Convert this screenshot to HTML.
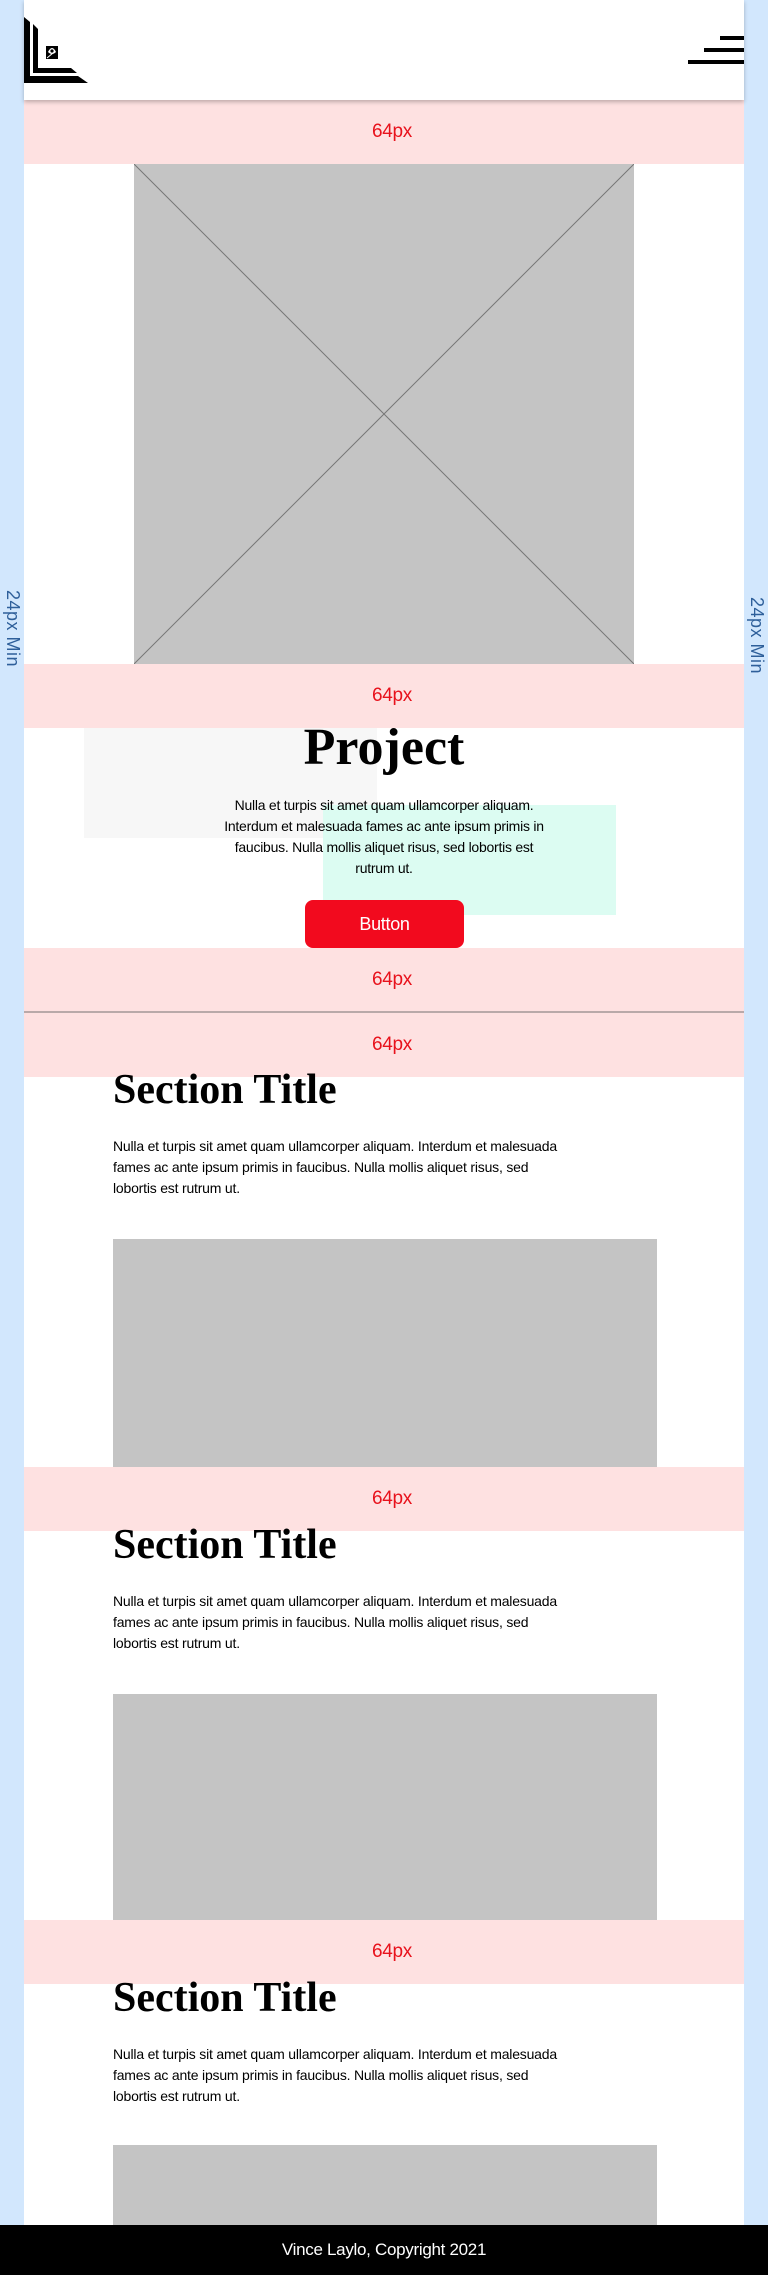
<!DOCTYPE html>
<html><head><meta charset="utf-8"><style>
*{margin:0;padding:0;box-sizing:border-box}
body{width:768px;height:2275px;position:relative;background:#fff;overflow:hidden;font-family:"Liberation Sans",sans-serif}
.a{position:absolute}
.side{background:#d2e7fd;top:0;height:2225px;width:24px}
.pink{left:24px;width:720px;height:64px;background:#fee1e1;color:#e8121c;font-size:19px;text-align:center;line-height:64px;padding-left:16px;letter-spacing:-0.3px}
.gray{background:#c4c4c4}
.title{font-family:"Liberation Serif",serif;font-weight:bold;font-size:42px;left:113px;letter-spacing:0;line-height:42px}
.para{left:113px;font-size:14px;line-height:21px;letter-spacing:-0.2px;color:#000;width:500px}
.lbl{color:#2e5f9a;font-size:18px;writing-mode:vertical-rl;letter-spacing:0.5px}
</style></head><body>
<div class="a side" style="left:0"></div>
<div class="a side" style="left:744px"></div>
<div class="a lbl" style="left:2px;top:590px">24px Min</div>
<div class="a lbl" style="left:746px;top:597px">24px Min</div>

<div class="a" style="left:24px;top:0;width:720px;height:100px;background:#fff;box-shadow:0 2px 4px rgba(0,0,0,0.25);z-index:2"></div>
<svg class="a" style="left:24px;top:17px;z-index:3" width="64" height="66" viewBox="0 0 64 66">
<path d="M0 0 L6 5 L6 59 L54 59 L64 66 L0 66 Z" fill="#000"/>
<path d="M9 7 L14 12 L14 51 L47 51 L53 56 L9 56 Z" fill="#000"/>
<rect x="22" y="29" width="12" height="13" fill="#000"/>
<path d="M24 35 Q28 27 32 35 Q28 39 24 35Z" fill="#fff"/>
<circle cx="28" cy="34" r="1.6" fill="#000"/>
<path d="M23 41 L29 36" stroke="#fff" stroke-width="1"/>
</svg>
<div class="a" style="left:720px;top:36px;width:24px;height:4px;background:#000;z-index:3"></div>
<div class="a" style="left:704px;top:48px;width:40px;height:4px;background:#000;z-index:3"></div>
<div class="a" style="left:688px;top:60px;width:56px;height:4px;background:#000;z-index:3"></div>

<div class="a pink" style="top:100px">64px</div>
<svg class="a" style="left:134px;top:164px" width="500" height="500">
<rect width="500" height="500" fill="#c4c4c4"/>
<path d="M0 0 L500 500 M500 0 L0 500" stroke="#777" stroke-width="1"/>
</svg>
<div class="a pink" style="top:664px">64px</div>

<div class="a" style="left:84px;top:728px;width:293px;height:110px;background:#f7f7f7"></div>
<div class="a" style="left:323px;top:805px;width:293px;height:110px;background:#dcfcf2"></div>
<div class="a" style="left:0;width:768px;top:720px;text-align:center;font-family:'Liberation Serif',serif;font-weight:bold;font-size:52px;line-height:56px">Project</div>
<div class="a" style="left:164px;width:440px;top:795px;text-align:center;font-size:14px;line-height:21px;letter-spacing:-0.25px">Nulla et turpis sit amet quam ullamcorper aliquam.<br>Interdum et malesuada fames ac ante ipsum primis in<br>faucibus. Nulla mollis aliquet risus, sed lobortis est<br>rutrum ut.</div>
<div class="a" style="left:305px;top:900px;width:159px;height:48px;background:#f20a1e;border-radius:8px;color:#fff;font-size:18px;text-align:center;line-height:48px;letter-spacing:-0.3px">Button</div>

<div class="a pink" style="top:948px">64px</div>
<div class="a" style="left:24px;top:1011px;width:720px;height:2px;background:#b9a9a9"></div>
<div class="a pink" style="top:1013px">64px</div>

<div class="a title" style="top:1069px">Section Title</div>
<div class="a para" style="top:1136px">Nulla et turpis sit amet quam ullamcorper aliquam. Interdum et malesuada<br>fames ac ante ipsum primis in faucibus. Nulla mollis aliquet risus, sed<br>lobortis est rutrum ut.</div>
<div class="a gray" style="left:113px;top:1239px;width:544px;height:228px"></div>
<div class="a pink" style="top:1467px">64px</div>

<div class="a title" style="top:1524px">Section Title</div>
<div class="a para" style="top:1591px">Nulla et turpis sit amet quam ullamcorper aliquam. Interdum et malesuada<br>fames ac ante ipsum primis in faucibus. Nulla mollis aliquet risus, sed<br>lobortis est rutrum ut.</div>
<div class="a gray" style="left:113px;top:1694px;width:544px;height:228px"></div>
<div class="a pink" style="top:1920px">64px</div>

<div class="a title" style="top:1977px">Section Title</div>
<div class="a para" style="top:2044px">Nulla et turpis sit amet quam ullamcorper aliquam. Interdum et malesuada<br>fames ac ante ipsum primis in faucibus. Nulla mollis aliquet risus, sed<br>lobortis est rutrum ut.</div>
<div class="a gray" style="left:113px;top:2145px;width:544px;height:80px"></div>

<div class="a" style="left:0;top:2225px;width:768px;height:50px;background:#000;color:#fff;text-align:center;font-size:17px;line-height:50px;letter-spacing:-0.3px">Vince Laylo, Copyright 2021</div>
</body></html>
